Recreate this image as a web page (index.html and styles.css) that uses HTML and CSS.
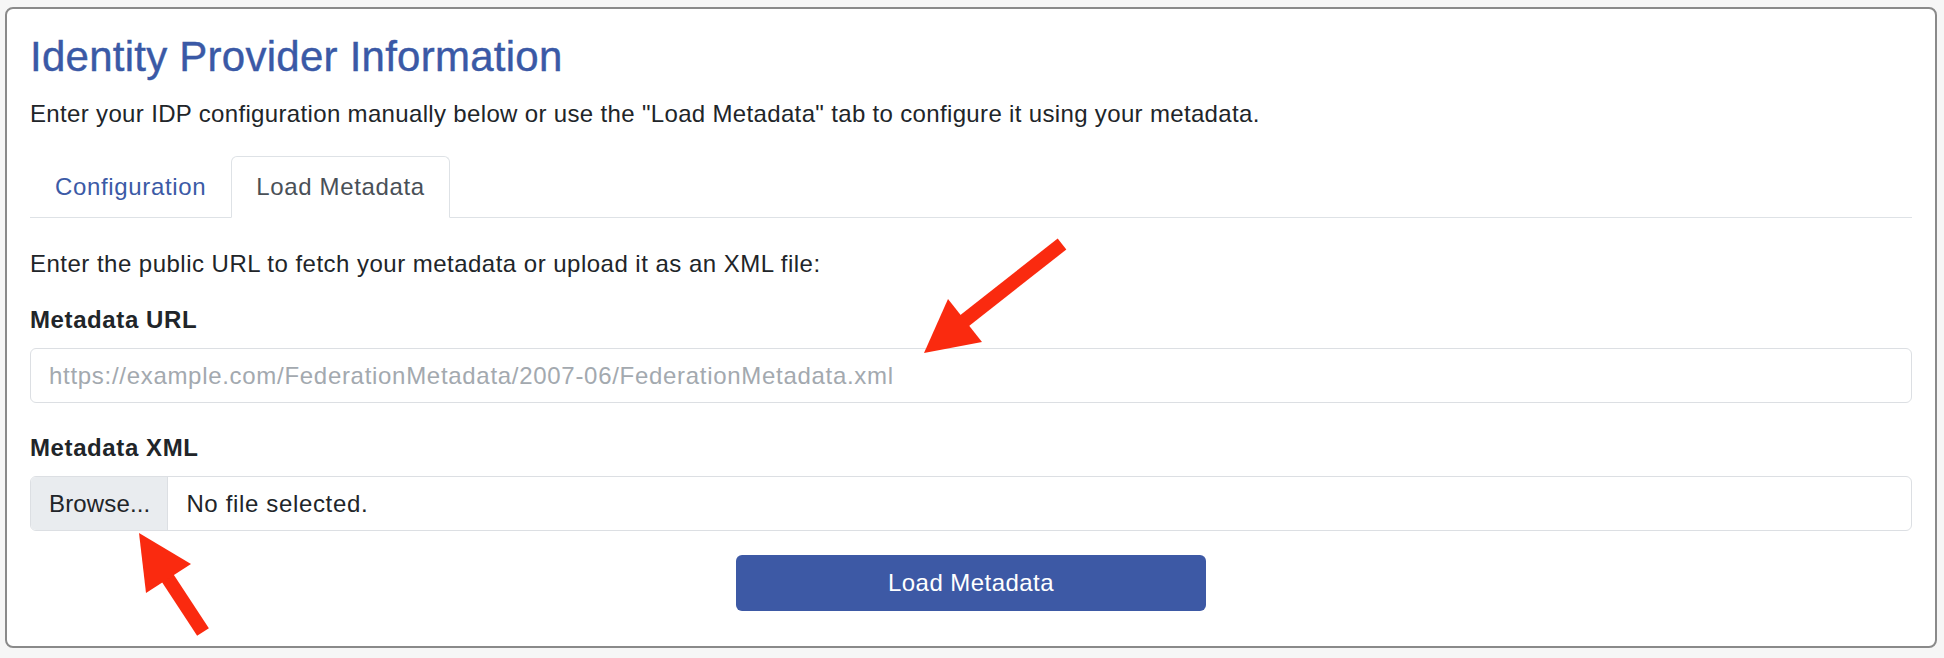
FILE: index.html
```html
<!DOCTYPE html>
<html lang="en">
<head>
	<meta charset="UTF-8">
	<title>Identity Provider Information</title>
	<link rel="stylesheet" href="styles.css">
</head>
<body>

	<div class="card">
		<h3 class="title">Identity Provider Information</h3>
		<p class="intro">Enter your IDP configuration manually below or use the "Load Metadata" tab to configure it using your metadata.</p>

		<ul class="tabs">
			<li><a class="tab-link">Configuration</a></li>
			<li><a class="tab-link active">Load Metadata</a></li>
		</ul>

		<div class="tab-pane">
			<p class="hint">Enter the public URL to fetch your metadata or upload it as an XML file:</p>

			<div class="group">
				<label class="label">Metadata URL</label>
				<input class="field" type="text" placeholder="https://example.com/FederationMetadata/2007-06/FederationMetadata.xml">
			</div>

			<div class="group">
				<label class="label">Metadata XML</label>
				<div class="file">
					<span class="file-btn">Browse...</span>
					<span class="file-name">No file selected.</span>
				</div>
			</div>

			<div class="actions">
				<button class="submit">Load Metadata</button>
			</div>
		</div>
	</div>

	<!-- annotation arrows -->
	<svg class="marks" width="1944" height="658" viewBox="0 0 1944 658">
		<line x1="959" y1="325" x2="1062" y2="244" stroke="#fa2a0f" stroke-width="14"/>
		<polygon points="924,353 982,342 948,299" fill="#fa2a0f"/>
		<line x1="163" y1="571" x2="203" y2="632" stroke="#fa2a0f" stroke-width="14"/>
		<polygon points="139,533 191,564 146,593" fill="#fa2a0f"/>
	</svg>

</body>
</html>
```

FILE: styles.css
```css
body {
	margin: 0;
	padding: 7px 7px 0 5px;
	background: #f6f6f6;
	font-family: "Liberation Sans", Arial, sans-serif;
	font-size: 24px;
	line-height: 36px;
	letter-spacing: 0.4px;
	color: #212529;
}
.card {
	background: #fff;
	border: 2px solid #8a8a8a;
	border-radius: 8px;
	padding: 23px 23px 35px 23px;
	height: 641px;
	box-sizing: border-box;
}
.title {
	margin: 0 0 14px 0;
	font-size: 42px;
	line-height: 50px;
	font-weight: normal;
	letter-spacing: 0.25px;
	color: #3a59a6;
	-webkit-text-stroke: 0.4px #3a59a6;
}
.intro {
	margin: 0 0 24px 0;
	letter-spacing: 0.34px;
}
.tabs {
	display: flex;
	margin: 0;
	padding: 0;
	list-style: none;
	border-bottom: 1px solid #dee2e6;
}
.tabs li {
	margin-bottom: -1px;
}
.tab-link {
	display: block;
	padding: 12px 24px;
	border: 1px solid transparent;
	border-top-left-radius: 6px;
	border-top-right-radius: 6px;
	letter-spacing: 0.65px;
	color: #3b5aa6;
}
.tab-link.active {
	color: #495057;
	background: #fff;
	border-color: #dee2e6 #dee2e6 #fff;
}
.tab-pane {
	padding-top: 28px;
}
.hint {
	margin: 0 0 20px 0;
	letter-spacing: 0.48px;
}
.group {
	margin-bottom: 27px;
}
.label {
	display: block;
	font-weight: bold;
	letter-spacing: 0.6px;
	margin-bottom: 10px;
}
.group + .group .label {
	margin-top: 1px;
}
.field {
	display: block;
	width: 100%;
	height: 55px;
	box-sizing: border-box;
	padding: 0 18px;
	border: 1px solid #dcdfe3;
	border-radius: 6px;
	font-family: "Liberation Sans", Arial, sans-serif;
	font-size: 24px;
	letter-spacing: 0.7px;
	color: #495057;
}
.field::placeholder {
	color: #a3a9af;
}
.file {
	display: flex;
	height: 55px;
	box-sizing: border-box;
	border: 1px solid #dcdfe3;
	border-radius: 6px;
	overflow: hidden;
	align-items: stretch;
}
.file-btn {
	display: flex;
	align-items: center;
	padding: 0 17px 0 18px;
	background: #e9ecef;
	border-right: 1px solid #dcdfe3;
	letter-spacing: 0.15px;
}
.file-name {
	display: flex;
	align-items: center;
	padding-left: 18px;
	letter-spacing: 0.65px;
}
.actions {
	display: flex;
	justify-content: center;
	margin-top: -3px;
}
.submit {
	width: 470px;
	height: 56px;
	border: none;
	border-radius: 6px;
	background: #3d59a5;
	color: #fff;
	font-family: "Liberation Sans", Arial, sans-serif;
	font-size: 24px;
	letter-spacing: 0.45px;
}
.marks {
	position: absolute;
	top: 0;
	left: 0;
	pointer-events: none;
}
```
